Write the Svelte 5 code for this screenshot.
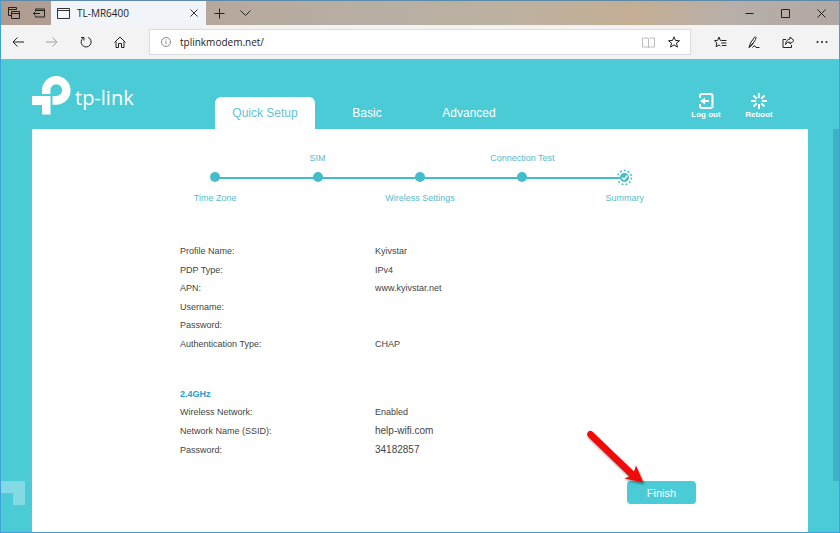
<script lang="ts">
	let address = 'tplinkmodem.net/';

	const steps = [
		{ name: 'Time Zone', above: false },
		{ name: 'SIM', above: true },
		{ name: 'Wireless Settings', above: false },
		{ name: 'Connection Test', above: true },
		{ name: 'Summary', above: false, current: true }
	];

	const profile = [
		['Profile Name:', 'Kyivstar'],
		['PDP Type:', 'IPv4'],
		['APN:', 'www.kyivstar.net'],
		['Username:', ''],
		['Password:', ''],
		['Authentication Type:', 'CHAP']
	];
</script>

<div class="browser">
	<header class="titlebar">
		<button class="tool small" aria-label="Tabs you've set aside">
			<svg width="12" height="12" viewBox="0 0 12 12"><path d="M3.5 8.5h-3v-8h8v2M.5 2.5h8M3.5 4.5h8v7h-8zM3.5 6.5h8" /></svg>
		</button>
		<button class="tool small" aria-label="Set tabs aside">
			<svg width="12" height="12" viewBox="0 0 12 12"><path d="M2.500 4V2h9v8h-9V9M2.500 3.500h9M7 6.500H.5M2.500 4.500l-2 2 2 2" /></svg>
		</button>
		<div class="tab">
			<svg width="13" height="11" viewBox="0 0 13 11"><path d="M.5.5h12v10H.5zM.5 2.500h12" /></svg>
			<span class="tab-title">TL-MR6400</span>
			<button class="tool close" aria-label="Close tab">
				<svg width="8" height="8" viewBox="0 0 8 8"><path d="M.5.5l7 7M7.500.5l-7 7" /></svg>
			</button>
		</div>
		<button class="tool new-tab" aria-label="New tab">
			<svg width="11" height="11" viewBox="0 0 11 11"><path d="M5.500.5v10M.5 5.500h10" /></svg>
		</button>
		<button class="tool small" aria-label="Show tab previews">
			<svg width="11" height="6" viewBox="0 0 11 6"><path d="M.5.5l5 5 5-5" /></svg>
		</button>
		<div class="window-controls">
			<button class="tool" aria-label="Minimize">
				<svg width="9" height="9" viewBox="0 0 9 9"><path d="M.5 4.500h8" /></svg>
			</button>
			<button class="tool" aria-label="Maximize">
				<svg width="9" height="9" viewBox="0 0 9 9"><path d="M.5.5h8v8h-8z" /></svg>
			</button>
			<button class="tool" aria-label="Close">
				<svg width="9" height="9" viewBox="0 0 9 9"><path d="M.5.5l8 8M8.500.5l-8 8" /></svg>
			</button>
		</div>
	</header>

	<div class="toolbar">
		<button class="tool" aria-label="Back">
			<svg width="12" height="10" viewBox="0 0 12 10"><path d="M12 5H1M5.500.5L1 5l4.500 4.500" /></svg>
		</button>
		<button class="tool faded" aria-label="Forward">
			<svg width="12" height="10" viewBox="0 0 12 10"><path d="M0 5h11M6.500.5L11 5 6.500 9.500" /></svg>
		</button>
		<button class="tool" aria-label="Refresh">
			<svg width="12" height="12" viewBox="0 0 12 12"><path d="M8.200 1.400A5 5 0 1 1 3.500 1.700M1 1.500h3v3" /></svg>
		</button>
		<button class="tool" aria-label="Home">
			<svg width="12" height="12" viewBox="0 0 12 12"><path d="M.5 6.500L6 1l5.500 5.500M2 5.500v6h2.500v-4h3v4H10v-6" /></svg>
		</button>
		<div class="address">
			<svg class="info" width="10" height="10" viewBox="0 0 10 10"><circle cx="5" cy="5" r="4.500" /><path d="M5 4.300v3M5 2.500v1" /></svg>
			<input type="text" aria-label="Address" spellcheck="false" bind:value={address} />
			<button class="tool small pale" aria-label="Reading view">
				<svg width="13" height="11" viewBox="0 0 13 11"><path d="M.5 1h4.500l1.500 1L8 1h4.500v9H8l-1.500.5L5 10H.5zM6.500 2v8.500" /></svg>
			</button>
			<button class="tool small" aria-label="Add to favorites">
				<svg width="12" height="12" viewBox="0 0 12 12"><path d="M6 .8l1.500 3.700 4 .2-3.100 2.500 1.100 3.900L6 8.900l-3.500 2.200 1.100-3.900L.5 4.700l4-.2z" /></svg>
			</button>
		</div>
		<button class="tool" aria-label="Favorites">
			<svg width="13" height="12" viewBox="0 0 13 12"><path d="M7.500 4.500L6.300 4.400 5 1 3.600 4.400.5 4.700 2.900 7l-.8 3.700L5 9l1.500 1M7.500 4.500h5M7 7h5.500M8 9.500h4.500" /></svg>
		</button>
		<button class="tool" aria-label="Make a web note">
			<svg width="12" height="13" viewBox="0 0 12 13"><path d="M1 11.500L2.500 7 6.500 1.200q1-.8 1.500.3L7.500 3.500 4 9zM1 11.500L5 7M4.500 11.500q1.500-2.500 2.500-1.500t1 1.500l3.500 0" /></svg>
		</button>
		<button class="tool" aria-label="Share">
			<svg width="13" height="12" viewBox="0 0 13 12"><path d="M4 3.500H1v8h8.500V9M8 1l4 3.500L8 8V6Q5 5.800 3.500 8.500 4 3.500 8 3z" /></svg>
		</button>
		<button class="tool" aria-label="More">
			<svg class="dots" width="12" height="4" viewBox="0 0 12 4"><circle cx="1.500" cy="2" r="1" /><circle cx="6" cy="2" r="1" /><circle cx="10.500" cy="2" r="1" /></svg>
		</button>
	</div>

	<div class="page">
		<svg class="decor" width="24" height="24" viewBox="0 0 24 24"><path d="M0 0h24v24H12V12H0z" /></svg>
		<span class="scroll-thumb"></span>

		<div class="page-header">
			<a class="brand" href="/">
				<svg width="39" height="39" viewBox="0 0 39 39">
					<path d="M0 20h18.500v18.500H10V29H0zM10 18v-4a14.300 14.300 0 1 1 14.300 14.700H20.500V20h3.800a5.900 5.900 0 1 0-5.900-5.900V18z" />
				</svg>
				<span>tp-link</span>
			</a>
			<nav class="tabs">
				<a class="active" href="#quick">Quick Setup</a>
				<a href="#basic">Basic</a>
				<a href="#advanced">Advanced</a>
			</nav>
			<div class="actions">
				<button>
					<svg width="16" height="16" viewBox="0 0 16 16"><path d="M2 5V3q0-2 2-2h8.500q2 0 2 2v10q0 2-2 2H4q-2 0-2-2v-2M11 8H4" /><path class="solid" d="M2 8l5-3.500v7z" /></svg>
					Log out
				</button>
				<button>
					<svg width="16" height="16" viewBox="0 0 16 16"><path d="M8 0v5M8 11v5M0 8h5M11 8h5M2.500 2.500l3.300 3.300M10.200 10.200l3.300 3.300M13.500 2.500l-3.300 3.300M5.800 10.200l-3.300 3.300" /></svg>
					Reboot
				</button>
			</div>
		</div>

		<main class="panel">
			<ol class="steps">
				{#each steps as step}
					<li class:above={step.above}>
						<span class="label">{step.name}</span>
						<span class="mark">
							{#if step.current}
								<svg width="17" height="17" viewBox="0 0 17 17">
									<circle class="ring" cx="8.500" cy="8.500" r="7" />
									<circle class="core" cx="8.500" cy="8.500" r="4.500" />
									<path d="M6 8.500l2 2 3.500-4" />
								</svg>
							{:else}
								<span class="dot"></span>
							{/if}
						</span>
					</li>
				{/each}
			</ol>

			<div class="summary">
				<dl class="profile">
					{#each profile as [name, value]}
						<dt>{name}</dt>
						<dd>{value}</dd>
					{/each}
				</dl>

				<h2>2.4GHz</h2>
				<dl class="wireless">
					<dt>Wireless Network:</dt>
					<dd>Enabled</dd>
					<dt>Network Name (SSID):</dt>
					<dd class="large">help-wifi.com</dd>
					<dt>Password:</dt>
					<dd class="large">34182857</dd>
				</dl>

				<div class="finish">
					<button>Finish</button>
					<svg class="arrow" width="64" height="60" viewBox="0 0 64 60">
						<path d="M9.600 2.800Q7 .8 5 3t.3 5L46.300 47.500 41.300 49.500 60.500 53.500 53 36.500 51 42.500z" />
					</svg>
				</div>
			</div>
		</main>
	</div>
</div>

<style>
	:global(body) {
		margin: 0;
	}

	.browser {
		display: flex;
		flex-direction: column;
		box-sizing: border-box;
		height: 100vh;
		border: 1px solid #3ea2d8;
		border-top-color: #5d8aa8;
		background-color: #f2f2f2;
		font-family: 'Liberation Sans', Arial, sans-serif;
		overflow: hidden;
	}

	button {
		padding: 0;
		border: 0;
		background: none;
		font-family: inherit;
	}

	a {
		text-decoration: none;
	}

	svg {
		display: block;
		flex: none;
	}

	.titlebar {
		display: flex;
		flex: none;
		height: 24px;
		background: linear-gradient(90deg, #b09b90 0%, #b8aba0 32%, #b7afa5 45%, #bcb1a0 60%, #c4ae94 76%, #b7afa9 87%, #b2a8a3 100%);
	}

	.tool {
		display: flex;
		align-items: center;
		justify-content: center;
		width: 34px;
	}

	.tool svg,
	.info {
		fill: none;
		stroke: #222;
		stroke-width: 1;
	}

	.tool .dots {
		fill: #222;
		stroke: none;
	}

	.small {
		width: 25px;
	}

	.new-tab {
		width: 27px;
	}

	.tab {
		display: flex;
		align-items: center;
		box-sizing: border-box;
		width: 155px;
		padding-left: 6px;
		background-color: #f1f4f8;
	}

	.tab svg {
		fill: none;
		stroke: #333;
	}

	.tab-title {
		flex: 1;
		margin-left: 7px;
		font: 10px 'Open Sans', 'Noto Sans', sans-serif;
		color: #222;
	}

	.close {
		width: 24px;
		height: 24px;
	}

	.window-controls {
		display: flex;
		margin-left: auto;
	}

	.window-controls .tool {
		width: 36px;
	}

	.toolbar {
		display: flex;
		flex: none;
		height: 34px;
		background-color: #f3f3f3;
	}

	.faded {
		opacity: 0.4;
	}

	.pale {
		opacity: 0.3;
	}

	.address {
		display: flex;
		flex: 1;
		align-items: center;
		min-width: 0;
		margin: 4px 12px;
		padding: 0 4px 0 11px;
		border: 1px solid #dcdcdc;
		background-color: #fff;
	}

	.info {
		stroke: #888;
	}

	.address input {
		flex: 1;
		min-width: 0;
		margin-left: 9px;
		padding: 0;
		border: 0;
		outline: 0;
		background: none;
		font: 10px 'Open Sans', 'Noto Sans', sans-serif;
		color: #222;
	}

	.page {
		display: flex;
		flex: 1;
		flex-direction: column;
		position: relative;
		min-height: 0;
		padding: 0 31px;
		background-color: #4acbd6;
		overflow: hidden;
	}

	.decor {
		position: absolute;
		left: 0;
		bottom: 27px;
		fill: #84dae2;
	}

	.scroll-thumb {
		position: absolute;
		top: 70px;
		right: 0;
		bottom: 51px;
		width: 6px;
		background-color: #3db1c8;
	}

	.page-header {
		display: flex;
		flex: none;
		height: 70px;
	}

	.brand {
		display: flex;
		gap: 4px;
		width: 183px;
		padding-top: 17px;
		font: 500 20px/44px 'Open Sans', 'Noto Sans', sans-serif;
		color: #fff;
		box-sizing: border-box;
	}

	.brand svg {
		fill: #fff;
	}

	.tabs {
		display: flex;
		align-items: flex-end;
		gap: 2px;
	}

	.tabs a {
		width: 100px;
		border-radius: 6px 6px 0 0;
		font-size: 12px;
		line-height: 32px;
		text-align: center;
		color: #fff;
	}

	.tabs .active {
		background-color: #fff;
		color: #5fc3d5;
	}

	.actions {
		display: flex;
		gap: 13px;
		margin-left: auto;
		padding: 34px 29px 0 0;
	}

	.actions button {
		display: flex;
		flex-direction: column;
		align-items: center;
		gap: 1px;
		width: 40px;
		font-size: 8px;
		font-weight: bold;
		line-height: 10px;
		color: #fff;
	}

	.actions svg {
		fill: none;
		stroke: #fff;
		stroke-width: 2;
	}

	.actions .solid {
		fill: #fff;
		stroke: none;
	}

	.panel {
		flex: 1;
		background-color: #fff;
	}

	.steps {
		display: grid;
		grid-template-columns: repeat(5, 1fr);
		max-width: 512px;
		margin: 0 auto;
		padding: 20px 0 0;
		list-style: none;
	}

	.steps li {
		display: grid;
		grid-template-rows: 18px 20px 22px;
		position: relative;
		justify-items: center;
		align-items: center;
	}

	.label {
		grid-row: 3;
		font-size: 9px;
		line-height: 18px;
		color: #55bccb;
	}

	.above .label {
		grid-row: 1;
	}

	.mark {
		grid-row: 2;
		z-index: 1;
	}

	.dot {
		display: block;
		width: 10px;
		height: 10px;
		border-radius: 50%;
		background-color: #43bdc9;
	}

	.steps li:not(:last-child)::after {
		content: '';
		position: absolute;
		top: 28px;
		left: 50%;
		width: 100%;
		height: 2px;
		background-color: #43bdc9;
	}

	.mark svg {
		fill: none;
		stroke: #fff;
		stroke-width: 1.5;
	}

	.mark .ring {
		stroke: #43bdc9;
		stroke-dasharray: 2 2;
	}

	.mark .core {
		fill: #43bdc9;
		stroke: none;
	}

	.summary {
		padding: 33px 112px 0 148px;
		font-size: 9px;
		color: #444;
	}

	dl {
		display: grid;
		grid-template-columns: 195px 1fr;
		grid-auto-rows: 1fr;
		align-items: center;
		margin: 0;
	}

	dd {
		margin: 0;
	}

	.profile {
		height: 111px;
	}

	.wireless {
		height: 56px;
	}

	.large {
		font-size: 10px;
	}

	h2 {
		margin: 32px 0 0;
		font-size: 9px;
		line-height: 18px;
		color: #27a0d4;
	}

	.finish {
		display: flex;
		justify-content: flex-end;
		position: relative;
		margin-top: 22px;
	}

	.finish button {
		width: 69px;
		height: 23px;
		border-radius: 4px;
		background-color: #4acbd6;
		font-size: 11px;
		color: #fff;
	}

	.arrow {
		position: absolute;
		right: 49px;
		bottom: 15px;
		fill: #f00a0a;
		filter: drop-shadow(1px 2px 1px rgba(0, 0, 0, 0.4));
	}
</style>
